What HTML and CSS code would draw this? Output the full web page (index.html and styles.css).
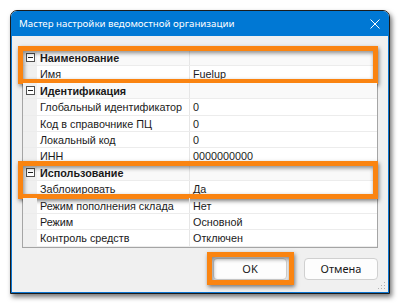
FILE: index.html
```html
<!DOCTYPE html>
<html lang="ru">
<head>
<meta charset="UTF-8">
<title>Мастер настройки ведомостной организации</title>
<link rel="stylesheet" href="styles.css">
</head>
<body>
<div class="window">
  <!-- заголовок окна -->
  <div class="titlebar">
    <span class="title">Мастер настройки ведомостной организации</span>
    <svg class="close" width="12" height="12" viewBox="0 0 12 12">
      <path d="M1.5 1.5 L10.5 10.5 M10.5 1.5 L1.5 10.5" stroke="#fff" stroke-width="1" fill="none"/>
    </svg>
  </div>
  <div class="content">
    <!-- сетка свойств -->
    <div class="grid">
      <div class="group marked">
        <div class="row cat"><span class="gutter"><i class="toggle"></i></span><span class="name">Наименование</span><span class="value"></span></div>
        <div class="row"><span class="gutter"></span><span class="name">Имя</span><span class="value">Fuelup</span></div>
      </div>
      <div class="group">
        <div class="row cat"><span class="gutter"><i class="toggle"></i></span><span class="name">Идентификация</span><span class="value"></span></div>
        <div class="row"><span class="gutter"></span><span class="name">Глобальный идентификатор</span><span class="value">0</span></div>
        <div class="row"><span class="gutter"></span><span class="name">Код в справочнике ПЦ</span><span class="value">0</span></div>
        <div class="row"><span class="gutter"></span><span class="name">Локальный код</span><span class="value">0</span></div>
        <div class="row"><span class="gutter"></span><span class="name">ИНН</span><span class="value">0000000000</span></div>
      </div>
      <div class="group marked">
        <div class="row cat"><span class="gutter"><i class="toggle"></i></span><span class="name">Использование</span><span class="value"></span></div>
        <div class="row"><span class="gutter"></span><span class="name">Заблокировать</span><span class="value">Да</span></div>
      </div>
      <div class="group">
        <div class="row"><span class="gutter"></span><span class="name">Режим пополнения склада</span><span class="value">Нет</span></div>
        <div class="row"><span class="gutter"></span><span class="name">Режим</span><span class="value">Основной</span></div>
        <div class="row"><span class="gutter"></span><span class="name">Контроль средств</span><span class="value">Отключен</span></div>
      </div>
    </div>
    <!-- кнопки -->
    <div class="buttons">
      <span class="marked-btn"><button class="btn">OK</button></span>
      <button class="btn">Отмена</button>
    </div>
    <svg class="grip" width="8" height="8" viewBox="0 0 8 8">
      <rect x="6" y="0" width="1" height="1" fill="#b0b0b0"/>
      <rect x="3" y="3" width="1" height="1" fill="#b0b0b0"/>
      <rect x="6" y="3" width="1" height="1" fill="#b0b0b0"/>
      <rect x="0" y="6" width="1" height="1" fill="#b0b0b0"/>
      <rect x="3" y="6" width="1" height="1" fill="#b0b0b0"/>
      <rect x="6" y="6" width="1" height="1" fill="#b0b0b0"/>
    </svg>
  </div>
</div>
</body>
</html>
```
FILE: styles.css
```css
body {
  margin: 0;
  width: 400px;
  height: 306px;
  overflow: hidden;
  background: #fff;
  font-family: "Liberation Sans", Arial, sans-serif;
}

.window {
  margin: 10px 0 0 10px;
  width: 378px;
  border: 1px solid #1c1c1c;
  border-radius: 7px 7px 0 0;
  box-shadow: 2px 3px 5px rgba(0, 0, 0, 0.55);
  background: #f0f0f0;
}

.titlebar {
  height: 25px;
  display: flex;
  align-items: center;
  justify-content: space-between;
  padding: 0 6px 0 8px;
  background: #0078d4;
  border-radius: 6px 6px 0 0;
  color: #fff;
  font-family: "Noto Sans", sans-serif;
  font-size: 9.7px;
}

.close {
  margin-right: 2px;
}

.content {
  position: relative;
  padding: 13px 10px 12px 10px;
  border: 1px solid #0a74d0;
  border-top: none;
}

/* сетка свойств */
.grid {
  border: 1px solid #a5a5a5;
  background: #fff;
  font-size: 10.8px;
  color: #1a1a1a;
}

.group {
  position: relative;
}

.row {
  display: flex;
  height: 16.4px;
  line-height: 16px;
  box-sizing: border-box;
  border-bottom: 1px solid #ececec;
}

.gutter {
  width: 14px;
  flex: none;
  display: flex;
  align-items: center;
  justify-content: center;
  background: #f0f0f0;
}

.name {
  width: 149px;
  flex: none;
  padding-left: 3px;
  border-right: 1px solid #e6e6e6;
  white-space: nowrap;
  overflow: hidden;
}

.value {
  padding-left: 3px;
  white-space: nowrap;
}

.cat {
  background: #f9f9f9;
}

.cat .name {
  font-weight: bold;
  overflow: visible;
}

.toggle {
  position: relative;
  width: 7px;
  height: 7px;
  border: 1px solid #505050;
  background: #fff;
}

.toggle::after {
  content: "";
  position: absolute;
  left: 1px;
  top: 3px;
  width: 5px;
  height: 1px;
  background: #202020;
}

/* оранжевые рамки */
.marked::after,
.marked-btn::after {
  content: "";
  position: absolute;
  border: 5px solid #fa8411;
  box-shadow: 1px 2px 4px rgba(0, 0, 0, 0.5), inset 1px 2px 4px rgba(0, 0, 0, 0.45);
  pointer-events: none;
}

.marked::after {
  top: -4px;
  left: -5px;
  right: -1px;
  bottom: -1px;
}

.buttons {
  display: flex;
  justify-content: flex-end;
  gap: 17px;
  padding-top: 10px;
}

.marked-btn {
  position: relative;
  display: flex;
}

.marked-btn::after {
  top: -6px;
  left: -6px;
  right: -7px;
  bottom: -5px;
}

.btn {
  width: 74px;
  height: 22px;
  padding: 0;
  border: 1px solid #d0d0d0;
  border-radius: 4px;
  background: #fdfdfd;
  color: #1a1a1a;
  font-family: "Noto Sans", sans-serif;
  font-size: 11px;
}

.grip {
  position: absolute;
  right: 2px;
  bottom: 2px;
}
```
